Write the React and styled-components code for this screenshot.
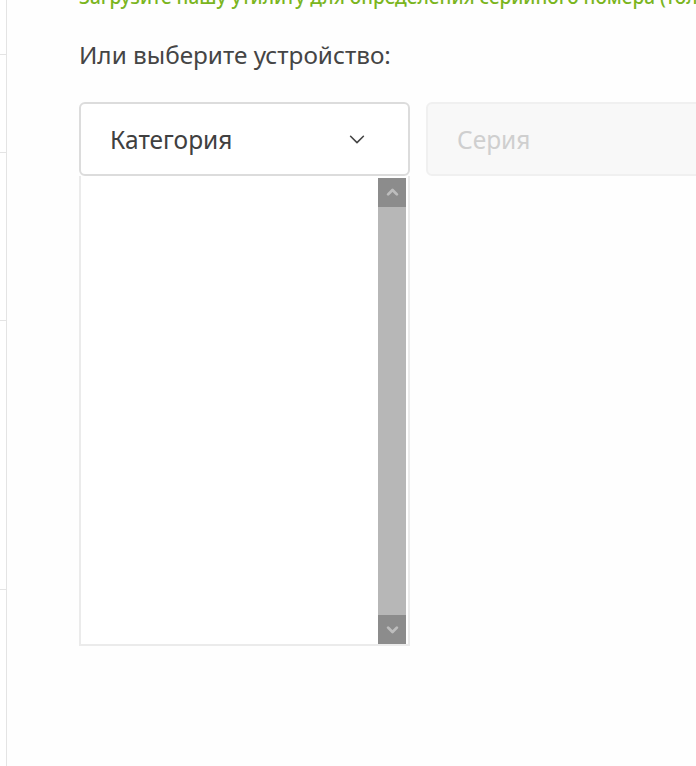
import React from "react";
import styled, { createGlobalStyle } from "styled-components";

const GlobalStyle = createGlobalStyle`
  html, body {
    margin: 0;
    padding: 0;
    background: #ffffff;
    overflow: hidden;
  }
  body {
    font-family: "Noto Sans", "Open Sans", Arial, sans-serif;
  }
`;

const Page = styled.div`
  display: flex;
  width: 696px;
  height: 766px;
  overflow: hidden;
`;

const Sidebar = styled.div`
  width: 6px;
  flex-shrink: 0;
  border-right: 1px solid #e4e4e4;
  display: flex;
  flex-direction: column;
`;

const SideItem = styled.div`
  height: ${(p) => p.h}px;
  border-bottom: 1px solid #e4e4e4;
`;

const Main = styled.div`
  flex: 1;
  padding-left: 72px;
  background: #fefefe;
  min-width: 0;
`;

const Hint = styled.p`
  margin: -14px 0 0;
  font-size: 19px;
  font-weight: 500;
  line-height: 22px;
  color: #7ab51d;
  white-space: nowrap;
`;

const Title = styled.h3`
  margin: 31px 0 0;
  font-size: 24.3px;
  font-weight: 400;
  line-height: 32px;
  color: #454545;
`;

const Row = styled.div`
  display: flex;
  gap: 16px;
  margin-top: 31px;
`;

const Column = styled.div`
  width: 331px;
  flex-shrink: 0;
  display: flex;
  flex-direction: column;
`;

const Select = styled.div`
  box-sizing: border-box;
  width: 331px;
  height: 74px;
  flex-shrink: 0;
  display: flex;
  align-items: center;
  justify-content: space-between;
  padding: 0 40px 0 29px;
  border-radius: 6px;
  border: 2px solid ${(p) => (p.disabled ? "#f0f0f0" : "#dcdcdc")};
  background: ${(p) => (p.disabled ? "#f8f8f8" : "#ffffff")};
  color: ${(p) => (p.disabled ? "#cfcfcf" : "#404040")};
  font-size: 24.5px;
`;

const List = styled.div`
  box-sizing: border-box;
  height: 470px;
  border: 2px solid #ebebeb;
  border-top: none;
  background: #ffffff;
  display: flex;
  justify-content: flex-end;
  padding: 2px 2px 0 0;
`;

const Track = styled.div`
  width: 28px;
  background: #b7b7b7;
  display: flex;
  flex-direction: column;
  justify-content: space-between;
`;

const ArrowButton = styled.div`
  height: 29px;
  background: #8c8c8c;
  display: flex;
  align-items: center;
  justify-content: center;
`;

const Chevron = ({ up, color = "#444", size = 22, width = 1.7 }) => (
  <svg width={size} height={size} viewBox="0 0 24 24" fill="none">
    <path
      d={up ? "M5 15l7-7 7 7" : "M5 9l7 7 7-7"}
      stroke={color}
      strokeWidth={width}
      strokeLinecap="round"
      strokeLinejoin="round"
    />
  </svg>
);

export default function App() {
  return (
    <>
      <GlobalStyle />
      <Page>
        <Sidebar>
          <SideItem h={54} />
          <SideItem h={97} />
          <SideItem h={167} />
          <SideItem h={268} />
        </Sidebar>
        <Main>
          <Hint>
            Загрузите нашу утилиту для определения серийного номера (только для Windows)
          </Hint>
          <Title>Или выберите устройство:</Title>
          <Row>
            <Column>
              <Select>
                Категория
                <Chevron />
              </Select>
              <List>
                <Track>
                  <ArrowButton>
                    <Chevron up color="#bdbdbd" size={15} width={4.5} />
                  </ArrowButton>
                  <ArrowButton>
                    <Chevron color="#bdbdbd" size={15} width={4.5} />
                  </ArrowButton>
                </Track>
              </List>
            </Column>
            <Column>
              <Select disabled>
                Серия
                <Chevron color="#cfcfcf" />
              </Select>
            </Column>
          </Row>
        </Main>
      </Page>
    </>
  );
}
